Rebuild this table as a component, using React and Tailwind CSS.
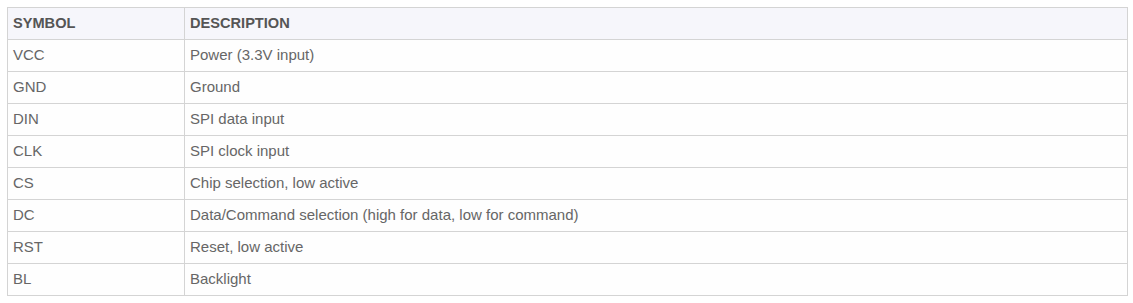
import React from 'react';

const rows = [
  { symbol: "VCC", description: "Power (3.3V input)" },
  { symbol: "GND", description: "Ground" },
  { symbol: "DIN", description: "SPI data input" },
  { symbol: "CLK", description: "SPI clock input" },
  { symbol: "CS", description: "Chip selection, low active" },
  { symbol: "DC", description: "Data/Command selection (high for data, low for command)" },
  { symbol: "RST", description: "Reset, low active" },
  { symbol: "BL", description: "Backlight" },
];

const App = () => {
  return (
    <div className="bg-white w-[1133px] h-[303px] pt-[7px] pl-[7px] font-['Liberation_Sans',Arial,sans-serif]">
      <table className="w-[1121px] border-collapse text-[15px] text-[#666]">
        <thead>
          <tr className="bg-[#f6f6fb] h-[32px]">
            <th className="w-[177px] border border-[#d4d4d4] px-[5px] text-left text-[14.6px] font-bold text-[#555]">SYMBOL</th>
            <th className="border border-[#d4d4d4] px-[5px] text-left text-[14.6px] font-bold text-[#555]">DESCRIPTION</th>
          </tr>
        </thead>
        <tbody>
          {rows.map((row, index) => (
            <tr key={index} className="h-[32px] bg-[#fefefe]">
              <td className="border border-[#d4d4d4] px-[5px]">{row.symbol}</td>
              <td className="border border-[#d4d4d4] px-[5px]">{row.description}</td>
            </tr>
          ))}
        </tbody>
      </table>
    </div>
  );
};

export default App;
